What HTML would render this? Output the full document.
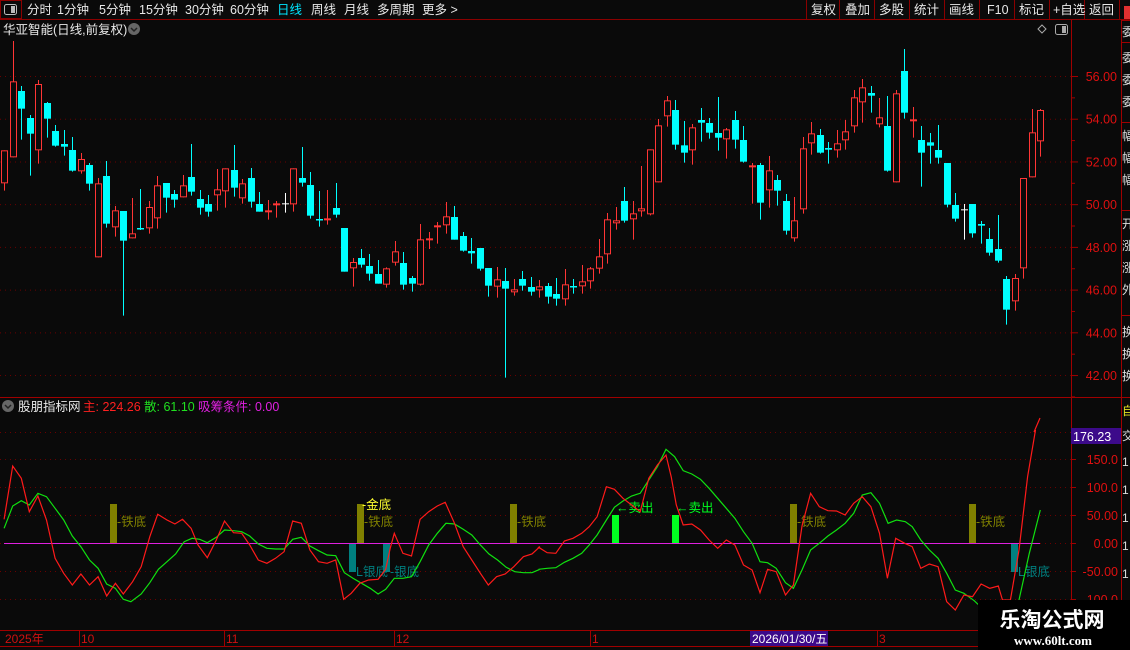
<!DOCTYPE html>
<html><head><meta charset="utf-8">
<style>
html,body{margin:0;padding:0;background:#0a0a0a;width:1130px;height:650px;overflow:hidden;font-family:"Liberation Sans","Noto Sans CJK SC",sans-serif;}
svg{position:absolute;left:0;top:0}
</style></head>
<body>
<svg id="s" width="1130" height="650" xmlns="http://www.w3.org/2000/svg" font-family="Liberation Sans, Noto Sans CJK SC, sans-serif">
<rect width="1130" height="650" fill="#0a0a0a"/>
<!-- top bar -->
<rect x="0.5" y="0.5" width="21" height="18" fill="none" stroke="#8b0000"/>
<rect x="4.5" y="4.5" width="12" height="10" rx="2" fill="none" stroke="#bbb"/>
<rect x="11" y="6" width="4" height="7" fill="#bbb"/>
<line x1="0" y1="19.5" x2="1130" y2="19.5" stroke="#8b0000"/>
<g fill="#e8e8e8" font-size="12.5">
<text x="27" y="14">分时</text><text x="57" y="14">1分钟</text><text x="99" y="14">5分钟</text><text x="139" y="14">15分钟</text><text x="185" y="14">30分钟</text><text x="230" y="14">60分钟</text>
<text x="277" y="14" fill="#00e5ff">日线</text><text x="311" y="14">周线</text><text x="344" y="14">月线</text><text x="377" y="14">多周期</text><text x="422" y="14">更多 &gt;</text>
</g>
<g stroke="#8b0000"><line x1="806.5" y1="0" x2="806.5" y2="19"/><line x1="839.5" y1="0" x2="839.5" y2="19"/><line x1="874.5" y1="0" x2="874.5" y2="19"/><line x1="909.5" y1="0" x2="909.5" y2="19"/><line x1="944.5" y1="0" x2="944.5" y2="19"/><line x1="979.5" y1="0" x2="979.5" y2="19"/><line x1="1014.5" y1="0" x2="1014.5" y2="19"/><line x1="1049.5" y1="0" x2="1049.5" y2="19"/><line x1="1084.5" y1="0" x2="1084.5" y2="19"/><line x1="1119.5" y1="0" x2="1119.5" y2="19"/></g>
<g fill="#e8e8e8" font-size="12.5">
<text x="811" y="14">复权</text><text x="845" y="14">叠加</text><text x="879" y="14">多股</text><text x="914" y="14">统计</text><text x="949" y="14">画线</text><text x="987" y="14">F10</text><text x="1019" y="14">标记</text><text x="1053" y="14">+自选</text><text x="1089" y="14">返回</text>
</g>
<rect x="1124" y="6" width="6" height="13" fill="#e03030"/>
<!-- title -->
<text x="3" y="34" fill="#e8e8e8" font-size="12.5">华亚智能(日线,前复权)</text>
<circle cx="134" cy="29" r="6" fill="#666"/><path d="M131 28l3 3 3-3" stroke="#222" stroke-width="1.5" fill="none"/>
<path d="M1042 25l4 4-4 4-4-4z" fill="none" stroke="#aaa"/>
<rect x="1055.5" y="24.5" width="12" height="10" rx="2" fill="none" stroke="#aaa"/><rect x="1062" y="26" width="4" height="7" fill="#aaa"/>
<!-- frames -->
<line x1="1071.5" y1="20" x2="1071.5" y2="646" stroke="#a00000"/>
<line x1="1121.5" y1="20" x2="1121.5" y2="646" stroke="#a00000"/>
<line x1="0" y1="397.5" x2="1130" y2="397.5" stroke="#a00000"/>
<line x1="0" y1="630.5" x2="1130" y2="630.5" stroke="#a00000"/>
<line x1="0" y1="646.5" x2="1130" y2="646.5" stroke="#a00000"/>
<g id="grid" stroke="#6a0000" stroke-dasharray="1,4"></g>
<g id="axis" fill="#e01010" font-size="12.5" text-anchor="end"></g>
<g id="candles"></g>
<!-- legend -->
<circle cx="8" cy="406" r="6" fill="#666"/><path d="M5 405l3 3 3-3" stroke="#222" stroke-width="1.5" fill="none"/>
<text x="18" y="411" fill="#e8e8e8" font-size="12.5">股朋指标网</text>
<text x="83" y="411" fill="#ff2020" font-size="12.5">主: 224.26</text>
<text x="144" y="411" fill="#20e020" font-size="12.5">散: 61.10</text>
<text x="198" y="411" fill="#e020e0" font-size="12.5">吸筹条件: 0.00</text>
<!-- bars -->
<g fill="#808000"><rect x="110" y="504" width="7" height="39"/><rect x="357" y="504" width="7" height="39"/><rect x="510" y="504" width="7" height="39"/><rect x="790" y="504" width="7" height="39"/><rect x="969" y="504" width="7" height="39"/></g>
<g fill="#808000" font-size="12.5"><text x="117" y="526">-铁底</text><text x="364" y="526">-铁底</text><text x="517" y="526">-铁底</text><text x="797" y="526">-铁底</text><text x="976" y="526">-铁底</text></g>
<text x="362" y="509" fill="#ffff30" font-size="12.5">-金底</text>
<g fill="#008080"><rect x="349" y="543" width="7" height="29"/><rect x="383" y="543" width="7" height="29"/><rect x="1011" y="543" width="7" height="29"/></g>
<g fill="#008080" font-size="12.5"><text x="356" y="576">L银底</text><text x="390" y="576">-银底</text><text x="1018" y="576">L银底</text></g>
<g fill="#00ff20"><rect x="612" y="515" width="7" height="28"/><rect x="672" y="515" width="7" height="28"/></g>
<g fill="#00ff20" font-size="12.5"><text x="616" y="512">←卖出</text><text x="676" y="512">←卖出</text></g>
<line x1="4" y1="543.5" x2="1040" y2="543.5" stroke="#e020e0"/>
<polyline id="gl" fill="none" stroke="#10e010" stroke-width="1.2"/>
<polyline id="rl" fill="none" stroke="#ff1a1a" stroke-width="1.2"/>
<g id="iax" fill="#e01010" font-size="12.5" text-anchor="end"></g>
<rect x="1071" y="428" width="50" height="16" fill="#3c0a8a"/>
<text x="1073" y="441" fill="#fff" font-size="12.5">176.23</text>
<!-- date axis -->
<g fill="#d01010" font-size="12"><text x="5" y="643">2025年</text><text x="81" y="643">10</text><text x="226" y="643">11</text><text x="396" y="643">12</text><text x="592" y="643">1</text><text x="879" y="643">3</text></g>
<g stroke="#a00000"><line x1="79.5" y1="631" x2="79.5" y2="646"/><line x1="224.5" y1="631" x2="224.5" y2="646"/><line x1="394.5" y1="631" x2="394.5" y2="646"/><line x1="590.5" y1="631" x2="590.5" y2="646"/><line x1="877.5" y1="631" x2="877.5" y2="646"/></g>
<rect x="750" y="631" width="78" height="15" fill="#3c0a8a"/>
<text x="752" y="643" fill="#fff" font-size="12">2026/01/30/五</text>
<!-- right column -->
<g stroke="#a00000" fill="none"><rect x="1121.5" y="20.5" width="10" height="22"/><rect x="1121.5" y="42.5" width="10" height="80"/><rect x="1121.5" y="122.5" width="10" height="88"/><rect x="1121.5" y="210.5" width="10" height="105"/><rect x="1121.5" y="315.5" width="10" height="82"/></g>
<g fill="#ddd" font-size="12"><text x="1122" y="36">委</text><text x="1122" y="62">委</text><text x="1122" y="84">委</text><text x="1122" y="106">委</text><text x="1122" y="140">幅</text><text x="1122" y="162">幅</text><text x="1122" y="184">幅</text><text x="1122" y="228">开</text><text x="1122" y="250">涨</text><text x="1122" y="272">涨</text><text x="1122" y="294">外</text><text x="1122" y="336">换</text><text x="1122" y="358">换</text><text x="1122" y="380">换</text></g>
<text x="1122" y="415" fill="#e0e020" font-size="12">自</text>
<g fill="#ddd" font-size="12"><text x="1122" y="440">交</text><text x="1122" y="466">1</text><text x="1122" y="494">1</text><text x="1122" y="522">1</text><text x="1122" y="550">1</text><text x="1122" y="578">1</text></g>
<!-- watermark -->
<rect x="978" y="600" width="152" height="50" fill="#000"/>
<text x="1052" y="627" fill="#fff" font-size="21" font-weight="bold" text-anchor="middle" font-family="Noto Sans CJK SC, sans-serif">乐淘公式网</text>
<text x="1053" y="645" fill="#fff" font-size="13" font-weight="bold" text-anchor="middle" font-family="Liberation Serif, serif">www.60lt.com</text>
</svg>
<script>
var NS="http://www.w3.org/2000/svg";
function el(p,t,a){var e=document.createElementNS(NS,t);for(var k in a)e.setAttribute(k,a[k]);p.appendChild(e);return e;}
var g=document.getElementById('grid'),ax=document.getElementById('axis'),iax=document.getElementById('iax');
for(var i=0;i<8;i++){var y=76+i*42.72;el(g,'line',{x1:0,x2:1071,y1:y+.5,y2:y+.5});var t=el(ax,'text',{x:1117,y:y+5});t.textContent=(56-2*i).toFixed(2);
el(ax,'line',{x1:1071,x2:1078,y1:y+.5,y2:y+.5,stroke:'#a00000'});el(ax,'line',{x1:1071,x2:1075,y1:y+21.86,y2:y+21.86,stroke:'#a00000'});}
var iy=[432,459,487,515,543,571,599],il=['200.0','150.0','100.0','50.00','0.00','-50.00','-100.0'];
for(var i=0;i<7;i++){el(g,'line',{x1:0,x2:1071,y1:iy[i]+.5,y2:iy[i]+.5});var t=el(iax,'text',{x:1118,y:iy[i]+5});t.textContent=il[i];el(iax,'line',{x1:1071,x2:1076,y1:iy[i]+.5,y2:iy[i]+.5,stroke:'#a00000'});}
var C=[[331,430,331,452,'r'],[124,352,3,352,'r'],[153,206,138,299,'c'],[234,281,225,407,'c'],[132,331,120,371,'r'],[189,236,186,293,'c'],[273,317,255,320,'c'],[312,320,270,347,'c'],[330,392,291,395,'c'],[357,394,339,401,'r'],[375,431,369,452,'c'],[430,652,414,652,'r'],[408,551,363,563,'c'],[511,562,498,590,'r'],[513,602,513,827,'c'],[580,595,474,595,'r'],[564,567,447,570,'c'],[501,565,483,581,'r'],[436,535,408,566,'r'],[429,473,429,518,'c'],[462,479,450,503,'c'],[436,472,405,472,'r'],[411,455,312,467,'c'],[477,503,450,524,'c'],[492,515,465,530,'c'],[448,466,387,512,'r'],[385,454,385,503,'r'],[390,443,315,470,'c'],[430,475,417,491,'r'],[414,485,384,503,'c'],[492,515,456,515,'c'],[511,517,480,539,'r'],[490,496,483,533,'r'],[490,491,459,518,'w'],[385,493,385,515,'r'],[414,428,321,440,'c'],[435,527,396,536,'c'],[537,539,453,560,'c'],[535,541,450,554,'r'],[504,524,429,533,'c'],[564,695,564,695,'c'],[666,685,654,740,'r'],
[654,674,627,683,'c'],[678,701,642,722,'c'],[702,731,660,731,'c'],[685,734,682,743,'r'],[634,668,603,677,'r'],[669,734,636,749,'c'],[714,731,708,755,'c'],[598,734,552,737,'r'],[595,601,576,627,'r'],[556,562,546,611,'r'],[529,556,486,581,'r'],[531,599,498,599,'c'],[588,632,576,635,'c'],[633,640,594,671,'c'],[624,686,624,692,'c'],[684,737,684,770,'c'],[718,740,681,773,'r'],[723,746,684,1013,'c'],[748,757,717,767,'r'],[717,737,693,752,'c'],[741,755,711,767,'c'],[739,751,720,773,'r'],[738,770,729,791,'c'],[762,776,714,797,'c'],[733,778,687,797,'r'],[738,740,717,761,'c'],[724,739,675,761,'r'],[685,724,681,746,'r'],[649,686,597,701,'r'],[538,643,519,671,'r'],[541,550,501,569,'r'],[483,542,441,548,'c'],[520,538,483,599,'r'],[505,514,378,530,'r'],[328,523,328,526,'r'],[256,427,237,427,'r'],[181,229,168,260,'r'],[210,314,180,329,'c'],[316,338,243,368,'c'],[262,331,252,374,'r'],
[240,248,204,305,'c'],[249,278,234,296,'c'],[279,293,171,332,'c'],[268,298,264,356,'r'],[240,299,213,326,'c'],[300,365,258,368,'c'],[376,382,369,491,'r'],[375,488,369,539,'c'],[391,451,348,503,'r'],[420,452,405,497,'c'],[483,572,462,584,'c'],[541,595,471,605,'r'],[325,508,291,521,'r'],[280,310,246,344,'r'],[285,338,267,341,'c'],[324,329,306,371,'c'],[310,331,270,353,'r'],[274,301,240,329,'r'],[172,259,150,278,'r'],[142,187,117,248,'r'],[159,167,138,218,'c'],[232,253,174,262,'r'],[258,392,168,395,'c'],[160,427,150,427,'r'],[93,218,27,236,'c'],[238,244,201,293,'r'],[300,338,258,440,'c'],[307,317,279,371,'c'],[330,353,255,371,'c'],[369,494,369,502,'c'],[495,536,459,545,'c'],[508,509,492,599,'w'],[492,580,492,593,'c'],[552,557,543,611,'c'],[597,638,564,647,'c'],[627,662,525,668,'c'],[717,809,708,854,'c'],[714,784,702,812,'r'],[414,685,414,716,'r'],[277,412,207,412,'r'],[210,304,207,350,'r']];
var cg=document.getElementById('candles');
C.forEach(function(c,i){var x=Math.round(4.33+i*8.492);var Y=function(z){return 40+z/3;};
var t=Y(c[0]),b=Y(c[1]),h=Y(c[2]),l=Y(c[3]);
var col=c[4]=='r'?'#ff3535':(c[4]=='c'?'#00ffff':'#ffffff');
el(cg,'line',{x1:x+.5,x2:x+.5,y1:h,y2:l,stroke:col});
if(c[4]=='r'){el(cg,'rect',{x:x-2.5,y:t+.5,width:6,height:Math.max(1,b-t-1),fill:'#0a0a0a',stroke:col});}
else if(c[4]=='c'){el(cg,'rect',{x:x-3,y:t,width:7,height:Math.max(1.5,b-t),fill:col});}
else{el(cg,'line',{x1:x-3,x2:x+4,y1:t+.5,y2:t+.5,stroke:col});}
});
function pts(a,off,sx){var s=[];for(var i=0;i<a.length;i+=2){s.push((off+a[i]/sx).toFixed(1)+','+(430+a[i+1]/3).toFixed(1));}return s.join(' ');}
var R1=[12,268,37,108,62,145,85,245,110,198,135,270,160,385,185,430,210,465,235,432,260,465,285,440,310,498,335,460,358,492,385,455,410,410,435,320,458,253,485,270,508,282,530,268,555,295,575,345,602,383,628,330,652,273,678,308,702,310,725,345,750,390,775,400,800,385,825,365,850,273,875,280,900,360,925,395,950,400,975,390,998,508,1020,490,1045,460,1070,450,1098,448,1120,418,1133,355,1145,310,1170,370,1195,378,1220,268,1245,245,1270,228,1293,217,1320,280,1345,350,1370,390,1395,430,1418,465,1442,440,1467,432,1492,410,1520,380,1545,372,1568,350];
var R2=[25,352,50,368,75,370,100,333,125,325,150,310,172,290,195,260,222,170,245,178,270,205,295,225,320,245,345,145,370,105,395,75,410,140,425,225,445,285,470,282,495,300,520,330,545,355,570,330,595,345,620,405,645,420,668,488,690,418,715,425,742,495,765,465,790,288,815,190,840,230,865,242,890,243,915,255,940,220,965,200,990,230,1015,310,1038,445,1062,325,1088,340,1110,350,1135,415,1160,402,1185,410,1210,515,1235,540,1260,495,1285,500,1310,462,1335,475,1360,468,1372,510,1395,510,1420,360,1445,140,1468,0];
var G1=[12,295,37,228,62,212,85,225,110,190,135,200,160,235,185,270,210,318,235,350,260,390,285,415,310,462,335,475,358,508,380,515,410,492,435,458,460,418,485,395,510,372,535,335,558,325,580,328,602,338,628,322,652,300,678,302,702,305,725,318,750,342,775,355,800,357,825,357,850,328,875,322,900,348,925,362,950,375,975,377,1000,428,1025,445,1050,460,1075,475,1098,492,1120,478,1145,445,1170,445,1195,440,1220,395,1245,345,1270,310,1295,280,1320,282,1345,298,1370,315,1395,345,1420,372,1445,390,1470,412,1495,425,1520,428,1545,428,1568,418];
var G2=[25,418,50,415,75,413,100,397,125,385,150,370,172,345,195,315,222,270,245,232,270,213,295,198,320,190,345,150,370,110,395,58,420,80,445,122,470,132,495,148,520,175,545,205,570,235,595,265,620,305,645,340,668,395,690,398,715,415,742,458,765,475,790,420,815,360,840,340,865,318,890,300,915,280,940,250,965,195,990,188,1015,220,1040,280,1065,270,1090,275,1110,290,1135,330,1160,360,1185,385,1210,430,1235,480,1260,490,1290,512,1300,522,1340,545,1400,560,1420,510,1450,370,1482,240];
document.getElementById('rl').setAttribute('points',pts(R1,0,2.904)+' '+pts(R2,530,2.904)+' 1034,432 1040,418');
document.getElementById('gl').setAttribute('points',pts(G1,0,2.904)+' '+pts(G2,530,2.904));
</script>
</body></html>
